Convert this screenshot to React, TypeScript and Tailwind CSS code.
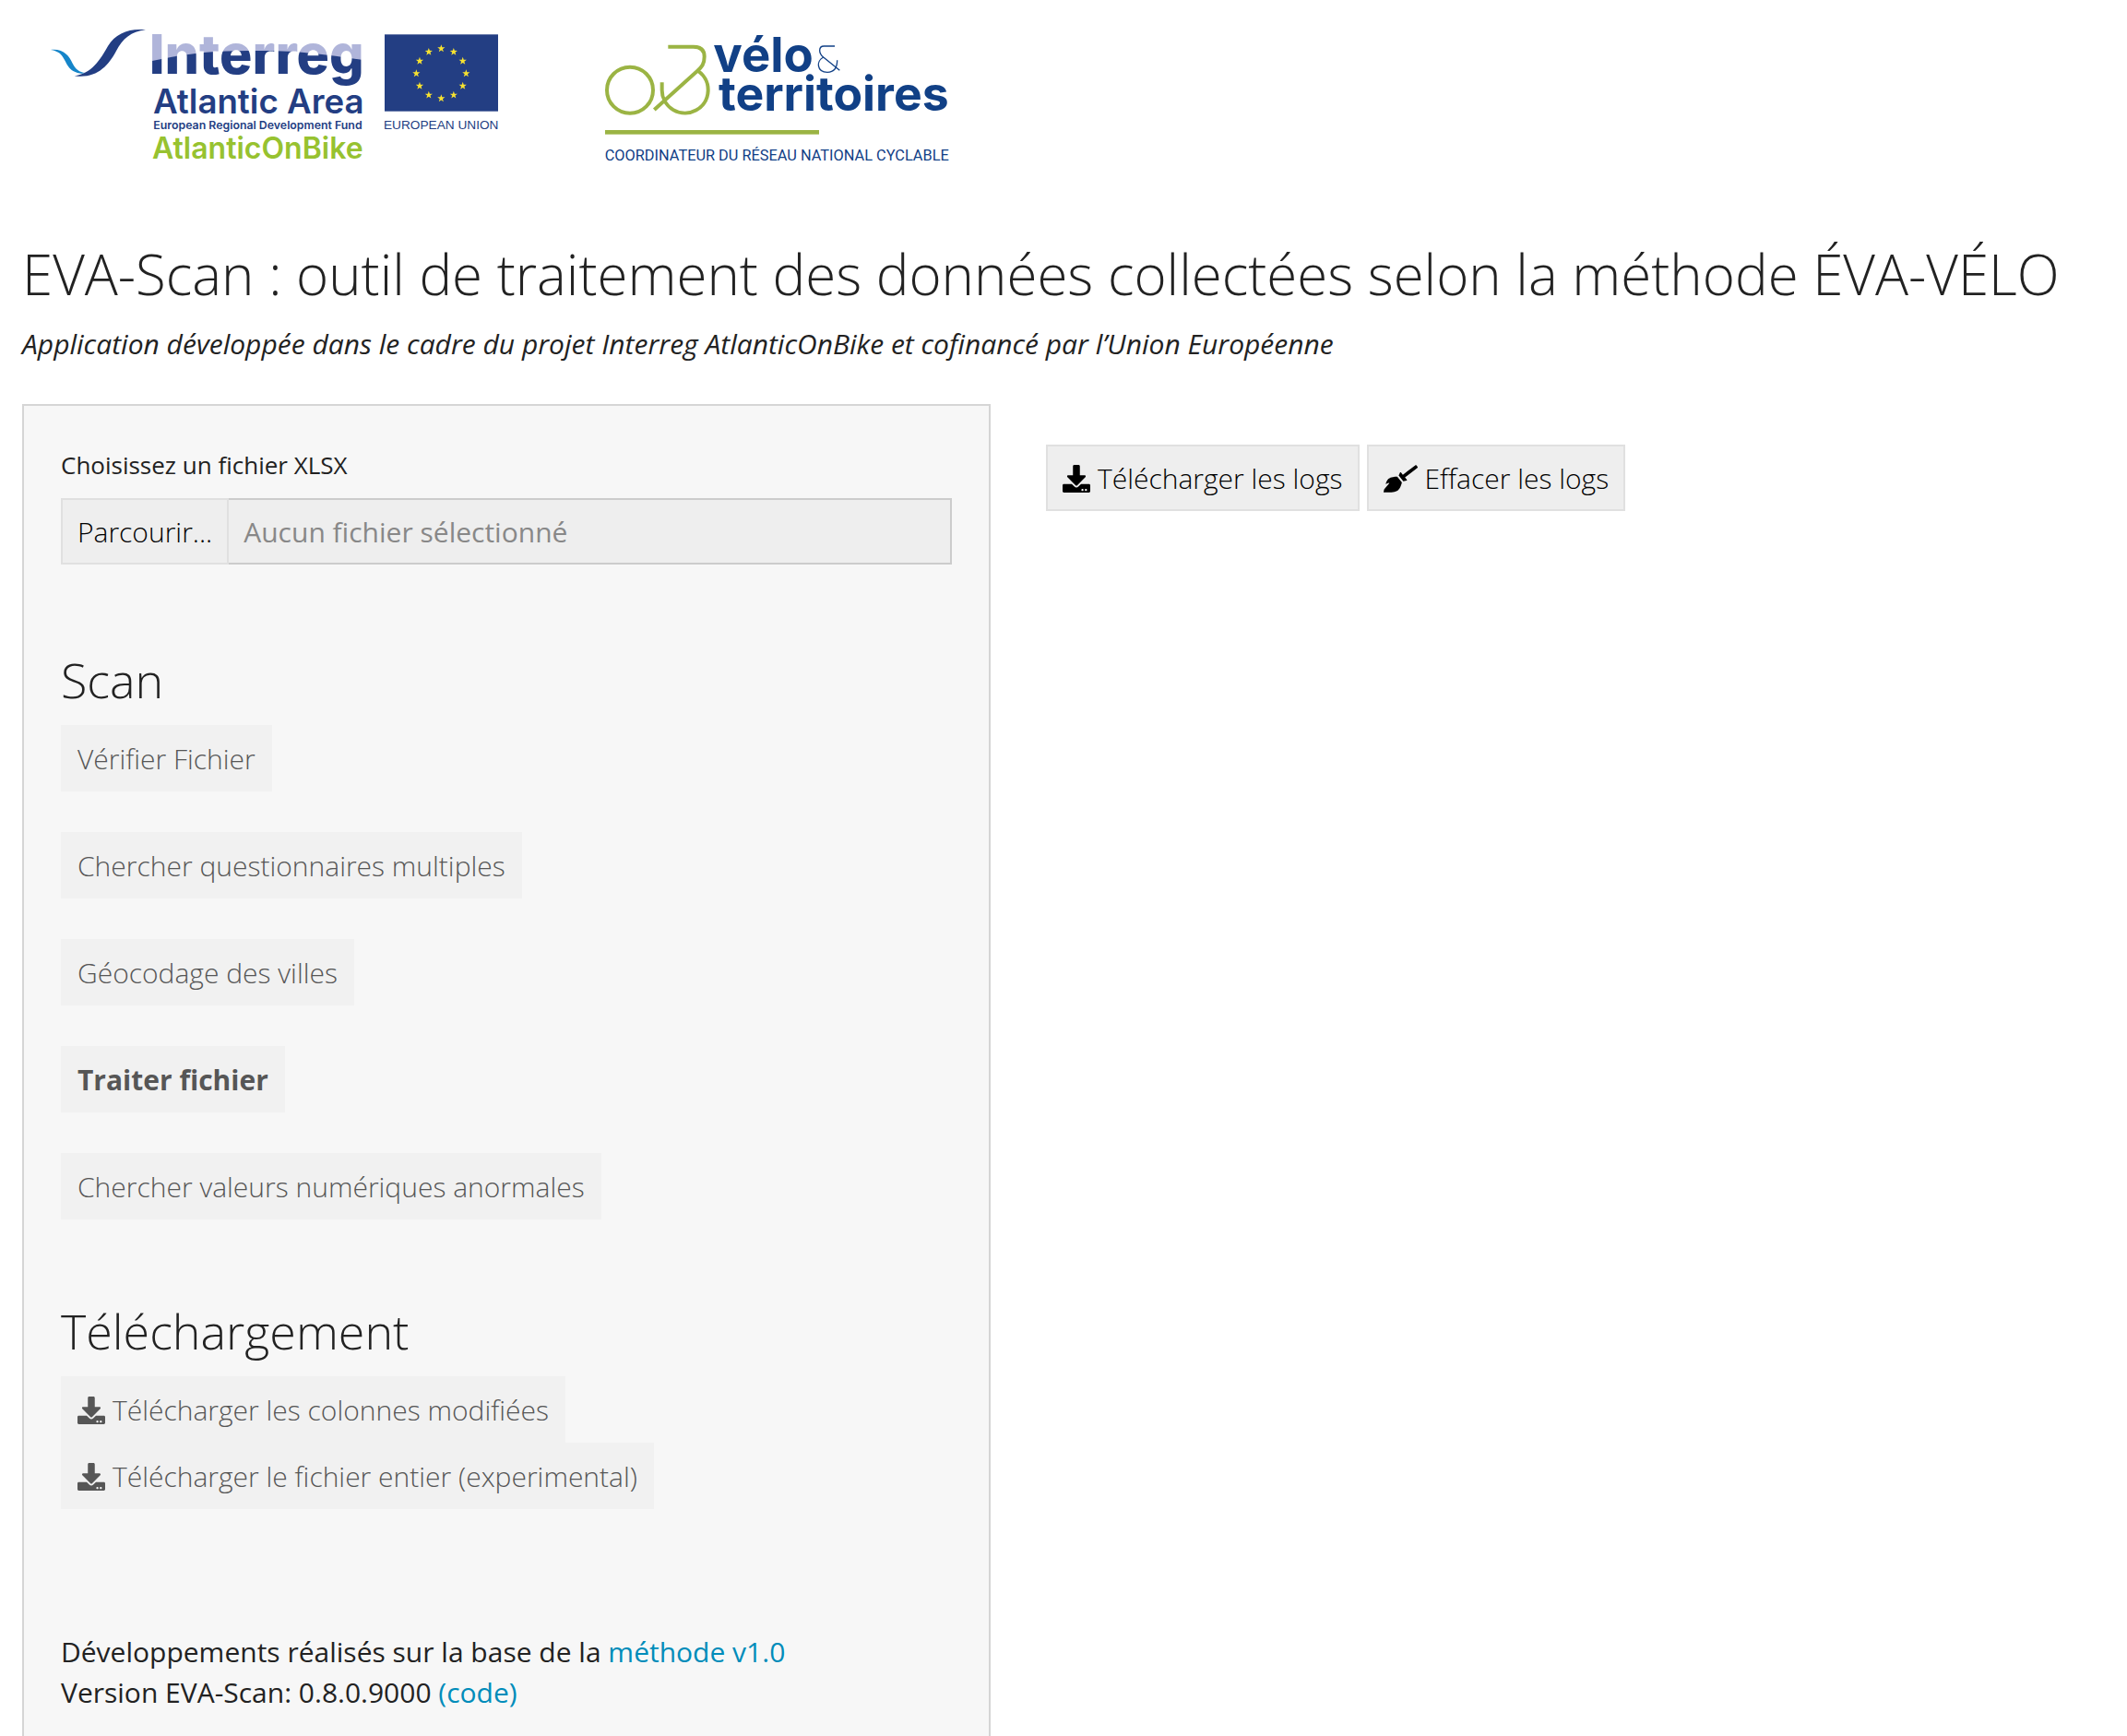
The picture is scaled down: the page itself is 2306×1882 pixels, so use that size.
import type { ReactNode } from "react";
import { FaBroom, FaDownload } from "react-icons/fa";

const STAR_COUNT = 12;

function starPoints(cx: number, cy: number, r: number): string {
  return Array.from({ length: 10 }, (_, i) => {
    const radius = i % 2 === 0 ? r : r * 0.4;
    const a = -Math.PI / 2 + (i * Math.PI) / 5;
    return `${(cx + radius * Math.cos(a)).toFixed(1)},${(cy + radius * Math.sin(a)).toFixed(1)}`;
  }).join(" ");
}

function InterregLogo() {
  return (
    <svg
      viewBox="0 0 1560 510"
      className="w-[520px] shrink-0"
      role="img"
      aria-label="Interreg Atlantic Area, AtlanticOnBike, European Union"
    >
      <defs>
        <pattern id="wave" patternUnits="userSpaceOnUse" x="0" y="0" width="1560" height="510">
          <rect width="1560" height="510" fill="#b0b5da" />
          <path
            d="M360 141 C430 126 500 113 580 108 C680 104 790 103 870 111 C940 118 1000 126 1080 138 V510 H360Z"
            fill="#233e83"
          />
        </pattern>
      </defs>
      <path
        d="M45 102 C88 98 104 122 116 146 C126 166 138 174 158 177 C148 182 130 178 118 171 C105 164 98 150 90 135 C80 116 70 106 45 102Z"
        fill="#1585c9"
      />
      <path
        d="M122 187 C178 180 206 134 231 90 C256 48 302 31 354 37 C306 42 279 66 258 106 C232 156 192 197 122 187Z"
        fill="#233e83"
      />
      <g className="font-[Inter,sans-serif] font-semibold" fill="#233e83">
        <text x="365" y="180" className="text-[177px] font-extrabold" fill="url(#wave)">
          Interreg
        </text>
        <text x="378" y="308" className="text-[110px]">
          Atlantic Area
        </text>
        <text x="379" y="360" className="text-[37px]">
          European Regional Development Fund
        </text>
        <text x="375" y="457" className="text-[96px]" fill="#97c230">
          AtlanticOnBike
        </text>
      </g>
      <rect x="1131" y="52" width="369" height="250" fill="#233e83" />
      {Array.from({ length: STAR_COUNT }, (_, i) => {
        const a = (i * 2 * Math.PI) / STAR_COUNT;
        return (
          <polygon
            key={i}
            points={starPoints(1315 + 81 * Math.sin(a), 179 - 81 * Math.cos(a), 13)}
            fill="#f7e230"
          />
        );
      })}
      <text
        x="1128"
        y="360"
        fill="#233e83"
        className="font-['Liberation_Sans',sans-serif] text-[41px]"
      >
        EUROPEAN UNION
      </text>
    </svg>
  );
}

function VeloLogo() {
  return (
    <svg
      viewBox="0 0 1200 510"
      className="w-[400px] shrink-0"
      role="img"
      aria-label="Vélo & territoires, coordinateur du réseau national cyclable"
    >
      <g fill="none" stroke="#9bb444" strokeWidth="12">
        <circle cx="129" cy="233" r="75" />
        <path d="M233 208 V233 A75 75 0 1 0 349 170" />
        <path d="M253 92 H335 C360 92 371 103 371 124 C371 148 363 158 347 172 L208 297" />
      </g>
      <rect x="48" y="363" width="696" height="14" fill="#9bb444" />
      <g fill="none" stroke="#114086" strokeWidth="4">
        <path d="M795 90 H760 C750 90 746 95 746 104 C746 114 750 119 758 126 L811 169" />
        <path d="M758 126 C734 138 736 175 771 175 C795 175 803 158 803 136" />
      </g>
      <g fill="#114086" className="font-[Inter,sans-serif] font-bold">
        <text x="400" y="173" className="text-[158px]">
          vélo
        </text>
        <text x="417" y="299" className="text-[155px]">
          territoires
        </text>
      </g>
      <text x="47" y="461" fill="#114086" className="font-[Roboto,sans-serif] text-[49px]">
        COORDINATEUR DU RÉSEAU NATIONAL CYCLABLE
      </text>
    </svg>
  );
}

type ButtonProps = { children: ReactNode; icon?: ReactNode; muted?: boolean; bold?: boolean };

function Button({ children, icon, muted, bold }: ButtonProps) {
  const tone = muted
    ? "border-[#f1f1f1] bg-[#f1f1f1] text-[#565656]"
    : "border-[#e0e0e0] bg-[#eeeeee] text-black";
  return (
    <button
      type="button"
      disabled={muted}
      className={`flex shrink-0 items-center gap-2 border-2 px-4 pt-[13px] pb-[11px] text-left whitespace-nowrap ${tone} ${
        bold ? "font-bold" : "font-light"
      }`}
    >
      {icon}
      {children}
    </button>
  );
}

const scanActions = [
  { label: "Vérifier Fichier" },
  { label: "Chercher questionnaires multiples" },
  { label: "Géocodage des villes" },
  { label: "Traiter fichier", bold: true },
  { label: "Chercher valeurs numériques anormales" },
];

export default function App() {
  const download = <FaDownload className="size-[30px]" aria-hidden />;

  return (
    <div className="min-h-screen bg-white px-6 font-['Open_Sans',sans-serif] text-[30px] leading-[44px] text-[#222222]">
      <header>
        <div className="flex gap-20 pt-5 pl-4">
          <InterregLogo />
          <VeloLogo />
        </div>
        <h1 className="mt-[74px] text-[60px] leading-[66px] font-light">
          EVA-Scan : outil de traitement des données collectées selon la méthode ÉVA-VÉLO
        </h1>
        <p className="mt-[21px] italic">
          Application développée dans le cadre du projet Interreg AtlanticOnBike et cofinancé par
          l’Union Européenne
        </p>
      </header>

      <div className="mt-[43px] grid grid-cols-[1050fr_1148fr] items-start gap-[60px]">
        <section className="border-2 border-[#d5d5d5] bg-[#f7f7f7] px-10 pt-[46px] pb-12">
          <label htmlFor="file-name" className="block text-[26px] leading-9">
            Choisissez un fichier XLSX
          </label>
          <div className="mt-[18px] flex">
            <Button>Parcourir...</Button>
            <input
              id="file-name"
              type="text"
              readOnly
              placeholder="Aucun fichier sélectionné"
              className="min-w-0 flex-1 border-2 border-l-0 border-[#cccccc] bg-[#eeeeee] px-4 pt-[13px] pb-[11px] placeholder:text-[#888888] placeholder:opacity-100"
            />
          </div>

          <h2 className="mt-[97px] text-[52px] leading-[56px] font-light">Scan</h2>
          <div className="mt-[21px] flex flex-col items-start gap-11">
            {scanActions.map((action) => (
              <Button key={action.label} muted bold={action.bold}>
                {action.label}
              </Button>
            ))}
          </div>

          <h2 className="mt-[93px] text-[52px] leading-[56px] font-light">Téléchargement</h2>
          <div className="mt-[21px] flex flex-col items-start">
            <Button muted icon={download}>
              Télécharger les colonnes modifiées
            </Button>
            <Button muted icon={download}>
              Télécharger le fichier entier (experimental)
            </Button>
          </div>

          <p className="mt-[133px]">
            Développements réalisés sur la base de la{" "}
            <a href="#methode" className="text-[#008cba]">
              méthode v1.0
            </a>
            <br />
            Version EVA-Scan: 0.8.0.9000{" "}
            <a href="#code" className="text-[#008cba]">
              (code)
            </a>
          </p>
        </section>

        <section className="flex gap-2 pt-11">
          <Button icon={download}>Télécharger les logs</Button>
          <Button icon={<FaBroom className="h-[30px] w-[37px]" aria-hidden />}>
            Effacer les logs
          </Button>
        </section>
      </div>
    </div>
  );
}
